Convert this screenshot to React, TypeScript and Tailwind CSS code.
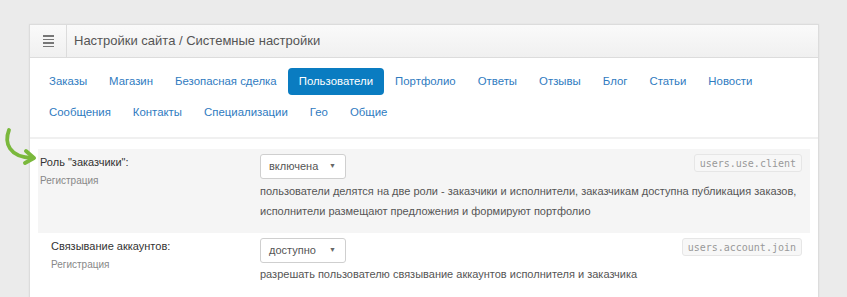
import type { FC } from "react";

const tabsRow1 = ["Заказы", "Магазин", "Безопасная сделка", "Пользователи", "Портфолио", "Ответы", "Отзывы", "Блог", "Статьи", "Новости"];
const tabsRow2 = ["Сообщения", "Контакты", "Специализации", "Гео", "Общие"];

const Tab: FC<{ name: string }> = ({ name }) => {
  const active = name === "Пользователи";
  return (
    <a
      className={
        active
          ? "h-[27px] px-[11px] flex items-center whitespace-nowrap rounded-[4px] bg-[#0a7cc1] text-white"
          : "h-[27px] px-[11px] flex items-center whitespace-nowrap text-[#2f7bbf]"
      }
    >
      {name}
    </a>
  );
};

const Select: FC<{ value: string }> = ({ value }) => (
  <div className="w-[86px] h-[25px] border border-[#cfcfcf] rounded-[3px] bg-white flex items-center justify-between pl-[8px] pr-[9px] text-[11px] text-[#555]">
    <span>{value}</span>
    <span className="text-[7px] text-[#666]">▼</span>
  </div>
);

const Code: FC<{ text: string }> = ({ text }) => (
  <span className="h-[18px] px-[5px] flex items-center rounded-[3px] border border-[#e6e6e6] bg-[#f7f7f7] text-[10px] text-[#999] font-['DejaVu_Sans_Mono',monospace]">
    {text}
  </span>
);

const App: FC = () => {
  return (
    <div className="relative h-[297px] bg-[#ebebeb] pt-[24px] pl-[29px] font-['Liberation_Sans',Arial,sans-serif] overflow-hidden">
      {/* green arrow annotation */}
      <svg className="absolute left-0 top-[127px]" width="42" height="38" viewBox="0 0 42 38">
        <path d="M9 3 C4 16 9 30 32 31" fill="none" stroke="#7ab83c" strokeWidth="3.8" strokeLinecap="round" />
        <path d="M26 24 L34 31 L25 36" fill="none" stroke="#7ab83c" strokeWidth="3.8" strokeLinecap="round" strokeLinejoin="round" />
      </svg>

      <div className="w-[790px] h-[290px] bg-white border border-[#dcdcdc] shadow-[0_0_2px_rgba(0,0,0,0.05)]">
        <div className="h-[33px] flex border-b border-[#dcdcdc] bg-gradient-to-b from-[#fafafa] to-[#f0f0f0]">
          <div className="w-[37px] flex items-center justify-center border-r border-[#dcdcdc]">
            <div className="w-[11px] flex flex-col gap-[2px]">
              <span className="h-[1.5px] bg-[#777]" />
              <span className="h-[1.5px] bg-[#777]" />
              <span className="h-[1.5px] bg-[#777]" />
              <span className="h-[1.5px] bg-[#777]" />
            </div>
          </div>
          <div className="pl-[7px] flex items-center text-[13px] text-[#555]">
            Настройки сайта / Системные настройки
          </div>
        </div>

        <div className="pt-[10px] pb-[11px] pl-[8px] flex flex-col gap-[4px] text-[11.4px] border-b-2 border-[#f0f0f0]">
          <div className="flex">
            {tabsRow1.map((t) => (
              <Tab key={t} name={t} />
            ))}
          </div>
          <div className="flex">
            {tabsRow2.map((t) => (
              <Tab key={t} name={t} />
            ))}
          </div>
        </div>

        <div className="mx-[8px] mt-[10px]">
          <div className="flex bg-[#f5f5f5] pt-[5px] h-[84px]">
            <div className="w-[222px] pl-[2px]">
              <div className="text-[11px] text-[#333] leading-[14px] mt-[1px]">Роль "заказчики":</div>
              <div className="text-[10px] text-[#888] mt-[4px]">Регистрация</div>
            </div>
            <div className="flex-1 pr-[8px]">
              <div className="flex justify-between items-start">
                <Select value="включена" />
                <Code text="users.use.client" />
              </div>
              <div className="text-[11px] text-[#555] leading-[20px] mt-[2px]">
                пользователи делятся на две роли - заказчики и исполнители, заказчикам доступна публикация заказов,
                <br />
                исполнители размещают предложения и формируют портфолио
              </div>
            </div>
          </div>

          <div className="flex pt-[5px]">
            <div className="w-[222px] pl-[13px]">
              <div className="text-[11px] text-[#333] leading-[14px] mt-[1px]">Связывание аккаунтов:</div>
              <div className="text-[10px] text-[#888] mt-[4px]">Регистрация</div>
            </div>
            <div className="flex-1 pr-[8px]">
              <div className="flex justify-between items-start">
                <Select value="доступно" />
                <Code text="users.account.join" />
              </div>
              <div className="text-[11px] text-[#555] leading-[20px] mt-[1px]">
                разрешать пользователю связывание аккаунтов исполнителя и заказчика
              </div>
            </div>
          </div>
        </div>
      </div>
    </div>
  );
};

export default App;
